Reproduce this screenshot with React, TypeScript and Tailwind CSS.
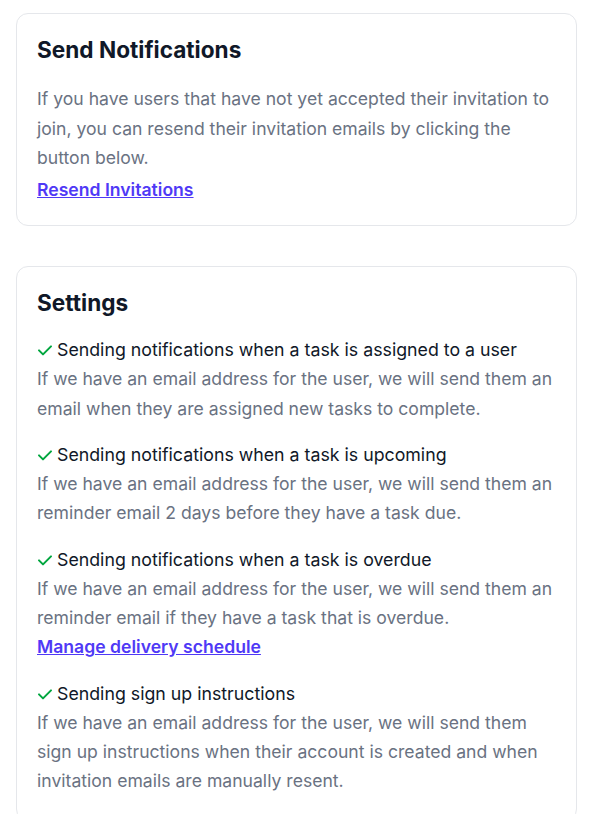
const settings = [
  {
    title: "Sending notifications when a task is assigned to a user",
    body: "If we have an email address for the user, we will send them an email when they are assigned new tasks to complete.",
  },
  {
    title: "Sending notifications when a task is upcoming",
    body: "If we have an email address for the user, we will send them an reminder email 2 days before they have a task due.",
  },
  {
    title: "Sending notifications when a task is overdue",
    body: "If we have an email address for the user, we will send them an reminder email if they have a task that is overdue.",
    link: "Manage delivery schedule",
  },
  {
    title: "Sending sign up instructions",
    body: "If we have an email address for the user, we will send them sign up instructions when their account is created and when invitation emails are manually resent.",
  },
];

const Check = () => (
  <svg
    viewBox="0 0 24 24"
    className="w-[16px] h-[16px] text-green-600 mr-[4px] shrink-0"
    fill="none"
    stroke="currentColor"
    strokeWidth={3}
    strokeLinecap="round"
    strokeLinejoin="round"
  >
    <path d="M3 12.5l6 6L21 6.5" />
  </svg>
);

export default function App() {
  return (
    <div
      className="bg-white min-h-screen pt-[13px] pl-4 pr-5 pb-10"
      style={{ fontFamily: "Inter, 'Noto Sans', sans-serif" }}
    >
      <div className="border border-gray-200 rounded-xl pl-5 pr-3 pt-5 pb-[21px]">
        <h2 className="text-[22.6px] leading-8 font-bold text-gray-900">Send Notifications</h2>
        <p className="mt-[18px] text-[17.6px] leading-[29.6px] text-gray-500">
          If you have users that have not yet accepted their invitation to join, you can resend
          their invitation emails by clicking the button below.
        </p>
        <a href="#" className="block mt-0.5 text-[17.6px] leading-[29.6px] font-semibold text-indigo-600 underline">
          Resend Invitations
        </a>
      </div>

      <div className="mt-10 border border-gray-200 rounded-xl pl-5 pr-3 pt-5 pb-6">
        <h2 className="text-[22.6px] leading-8 font-bold text-gray-900">Settings</h2>
        <div className="mt-[17px] flex flex-col gap-[18px]">
          {settings.map((s) => (
            <div key={s.title}>
              <div className="flex items-center text-[17.75px] leading-7 text-gray-900">
                <Check />
                <span>{s.title}</span>
              </div>
              <p className="text-[17.6px] leading-[29.3px] text-gray-500">{s.body}</p>
              {s.link && (
                <a href="#" className="block text-[17.6px] leading-[29.5px] font-semibold text-indigo-600 underline">
                  {s.link}
                </a>
              )}
            </div>
          ))}
        </div>
      </div>
    </div>
  );
}
